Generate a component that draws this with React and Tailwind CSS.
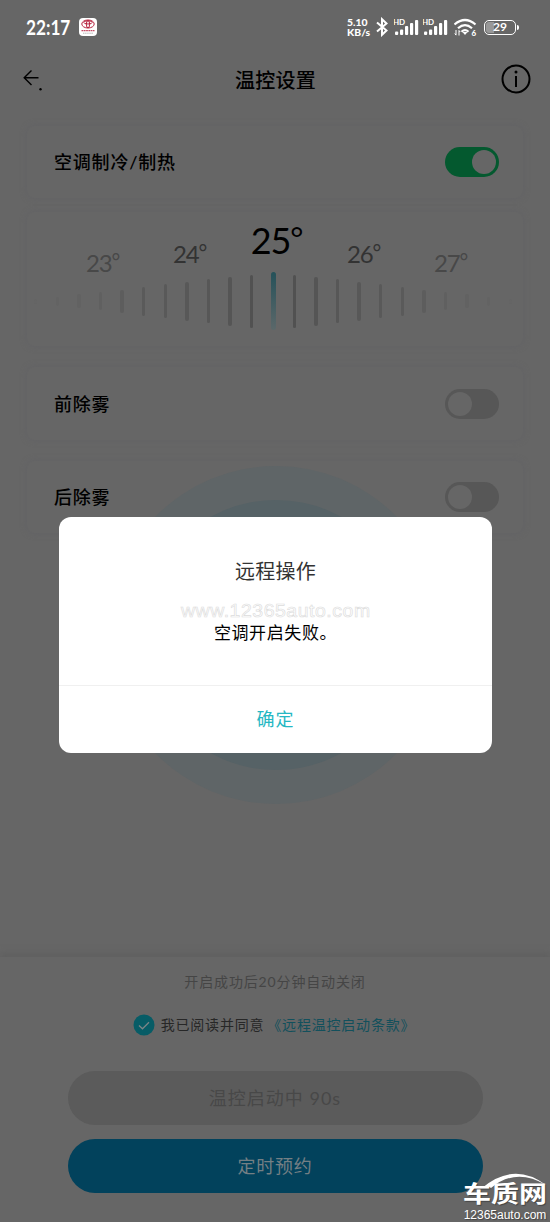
const ui = "font-['Lato','Noto_Sans_CJK_SC',sans-serif]";

const temps = [
  { value: 23, className: 'w-[87px] pt-[23px] text-[24px] text-[#484848]' },
  { value: 24, className: 'w-[87px] pt-[14px] text-[24px] text-[#333333]' },
  { value: 25, className: 'w-[87px] text-[36px] text-black' },
  { value: 26, className: 'w-[87px] pt-[14px] text-[24px] text-[#333333]' },
  { value: 27, className: 'w-[87px] pt-[23px] text-[24px] text-[#484848]' },
];

// half of the dial, from the centre outwards
const ticks = [
  { h: 53, o: 0.56 },
  { h: 49, o: 0.45 },
  { h: 44, o: 0.38 },
  { h: 39, o: 0.35 },
  { h: 34, o: 0.33 },
  { h: 29, o: 0.31 },
  { h: 23, o: 0.22 },
  { h: 18, o: 0.15 },
  { h: 14, o: 0.1 },
  { h: 9, o: 0.07 },
  { h: 5, o: 0.04 },
];

function Tick({ h, o }) {
  return <span className="w-[3.5px] rounded-full bg-[#404040]" style={{ height: h, opacity: o }} />;
}

function Signal() {
  return (
    <svg width="26" height="18" viewBox="0 0 26 18" fill="#fff">
      <text x="-1" y="7" fontSize="8" fontWeight="700" fontFamily="Lato, sans-serif" textLength="12">HD</text>
      <rect x="1" y="13.500" width="3.200" height="3.500" rx="1" />
      <rect x="6" y="11.500" width="3.200" height="5.500" rx="1" />
      <rect x="11" y="8" width="3.200" height="9" rx="1" />
      <rect x="16" y="5" width="3.200" height="12" rx="1" />
      <rect x="21" y="2" width="3.200" height="15" rx="1" />
    </svg>
  );
}

function StatusBar() {
  return (
    <div className="flex h-[54px] items-center pl-[26px] pr-[34px] text-white">
      <span className="w-[44px] whitespace-nowrap text-[20px] font-bold leading-none">
        <span className="inline-block origin-left scale-x-[0.86]">22:17</span>
      </span>
      <svg className="ml-[9px]" width="18" height="18" viewBox="0 0 18 18">
        <rect width="18" height="18" rx="4" fill="#fff" />
        <g fill="none" stroke="#b51f3c" strokeWidth="1">
          <ellipse cx="9" cy="6" rx="6.2" ry="4" />
          <ellipse cx="9" cy="6.200" rx="1.600" ry="3.600" />
          <ellipse cx="9" cy="4.400" rx="4.200" ry="1.600" />
        </g>
        <path d="M2.500 12.700h13" stroke="#b51f3c" strokeWidth="1.300" strokeDasharray="1.800 .5" opacity=".8" />
        <path d="M4 15.200h10" stroke="#999" strokeWidth=".7" strokeDasharray="1.500 .6" />
      </svg>
      <div className="ml-auto flex items-center">
        <div className="w-[25px] text-[10px] font-black leading-[10px]">
          <div className="origin-left scale-x-[1.04]">5.10</div>
          <div className="origin-left scale-x-[1.04]">KB/s</div>
        </div>
        <svg className="ml-[4px]" width="12" height="20" viewBox="0 0 12 20" fill="none" stroke="#fff" strokeWidth="2">
          <path d="M1 5.500l9.500 8L6 17.800V2.200l4.500 4.300L1 14.500" />
        </svg>
        <div className="ml-[6px] flex gap-[3px]">
          <Signal />
          <Signal />
        </div>
        <svg className="ml-[5px]" width="24" height="19" viewBox="0 0 24 19" fill="none" stroke="#fff" strokeWidth="2.2">
          <path d="M.5 6.500Q11-2.500 21.500 6.500M4 10.300Q11 4 18 10.300M7.500 13.800Q11 10.500 14.500 13.800" />
          <path d="M8.500 14h5L11 17z" fill="#fff" stroke="none" />
          <path d="M2 12v5M.8 15.500L2 17.200M5 17.500v-5M6.200 14L5 12.500" strokeWidth="1" />
          <text x="17.500" y="18" fontSize="8" fontWeight="900" fontFamily="Lato, sans-serif" fill="#fff" stroke="none">6</text>
        </svg>
        <div className="relative ml-[6px] flex h-[15px] w-[32px] items-center justify-center rounded-[5px] border-[1.5px] border-white text-[12px] font-bold leading-none">
          <span className="absolute inset-y-[1px] left-[1px] w-[8px] rounded-l-[3px] bg-[#989898]" />
          <span className="relative">29</span>
          <span className="absolute -right-[4px] top-[4px] h-[5px] w-[2px] rounded-r bg-white" />
        </div>
      </div>
    </div>
  );
}

function Toggle({ on }) {
  return (
    <span className={`flex h-[30px] w-[54px] items-center rounded-full px-[3px] ${on ? 'justify-end bg-[#04592f]' : 'justify-start bg-[#575757]'}`}>
      <span className="h-[24px] w-[24px] rounded-full bg-[#666666]" />
    </span>
  );
}

function SwitchCard({ label, on, className }) {
  return (
    <div className={`mx-[27px] flex items-center justify-between rounded-lg pl-[27px] pr-[24px] shadow-[0_0_6px_#626265] ${className}`}>
      <span className="text-[18px] font-medium leading-none tracking-[0.8px] text-black">{label}</span>
      <Toggle on={on} />
    </div>
  );
}

function Dial() {
  return (
    <div className="mx-[27px] mt-[14px] h-[134px] rounded-lg shadow-[0_0_6px_#626265]">
      <div className="flex h-[60px] justify-center pl-[3px] pt-[8px]">
        {temps.map((t) => (
          <div key={t.value} className={`flex justify-center leading-[40px] tracking-[-1.2px] ${t.className}`}>
            {t.value}
            <span className="-mt-[2px] text-[0.88em]">°</span>
          </div>
        ))}
      </div>
      <div className="flex h-[58px] items-center justify-center gap-[18.1px] pr-[4px]">
        {[...ticks].reverse().map((t) => <Tick key={t.h} {...t} />)}
        <span className="-mx-[1px] h-[58px] w-[5px] shrink-0 rounded-full bg-linear-to-b from-[#245159] to-[#5b686a]" />
        {ticks.map((t) => <Tick key={t.h} {...t} />)}
      </div>
    </div>
  );
}

function Dialog() {
  return (
    <div className="absolute left-[59px] top-[517px] flex h-[236px] w-[433px] flex-col rounded-[12px] bg-white text-center">
      <div className="relative flex-1">
        <h2 className="pt-[43px] text-[20px] leading-[22px] tracking-[0.2px] text-[#333333]">远程操作</h2>
        <div className="mt-[18px] font-['Liberation_Sans',sans-serif] text-[18px] leading-[22px] tracking-[0.5px] text-white [-webkit-text-stroke:0.6px_#dcdcdc]">
          <span className="inline-block scale-x-[1.08]">www.12365auto.com</span>
        </div>
        <p className="text-[17px] leading-[22px] tracking-[0.6px] text-black">空调开启失败。</p>
      </div>
      <button className="h-[68px] border-t border-[#f0f0f0] text-[18px] tracking-[1px] text-[#25b7c3]">确定</button>
    </div>
  );
}

function SiteMark() {
  return (
    <div className="absolute bottom-0 right-[2px] w-[86px] text-center text-white [text-shadow:1px_1px_1px_#444]">
      <div className="relative">
        <svg className="absolute left-[20px] top-[-1px]" width="66" height="16" viewBox="0 0 66 16">
          <path d="M0 15Q32-12 64 12Q34-6 9 15z" fill="#fff" />
        </svg>
        <div className="origin-[50%_80%] scale-y-[0.8] text-[28px] font-bold leading-[34px]">车质网</div>
      </div>
      <div className="font-['Liberation_Sans',sans-serif] text-[12px] leading-[14px]">12365auto.com</div>
    </div>
  );
}

export default function App() {
  return (
    <div className={`relative h-[1222px] w-[550px] overflow-hidden bg-[#666666] ${ui}`}>
      <div className="absolute left-[107px] top-[466px] flex h-[338px] w-[338px] items-center justify-center rounded-full bg-[#5f6567]">
        <div className="h-[270px] w-[270px] rounded-full bg-[#566266]" />
      </div>

      <div className="relative flex h-full flex-col">
        <StatusBar />
        <header className="flex h-[50px] items-center justify-between pl-[22px] pr-[19px]">
          <svg width="30" height="26" viewBox="0 0 30 26" fill="none" stroke="#000" strokeWidth="1.4">
            <path d="M9.500 4.500L2.200 11.700l7.300 7.200M2.200 11.700H16.500" />
            <circle cx="18.500" cy="23.300" r="1.200" fill="#000" stroke="none" />
          </svg>
          <h1 className="pr-[2px] pt-[2px] text-[20px] font-medium leading-none tracking-[0.2px] text-black">温控设置</h1>
          <svg width="30" height="30" viewBox="0 0 30 30" fill="none" stroke="#000" strokeWidth="2">
            <circle cx="15" cy="15" r="13.500" />
            <path d="M15 12v11" />
            <circle cx="15" cy="8" r="1.500" fill="#000" stroke="none" />
          </svg>
        </header>

        <SwitchCard label="空调制冷/制热" on className="mt-[22px] h-[72px]" />
        <Dial />
        <SwitchCard label="前除雾" className="mt-[21px] h-[73px]" />
        <SwitchCard label="后除雾" className="mt-[21px] h-[72px]" />

        <footer className="mt-auto flex h-[265px] flex-col items-center shadow-[0_-4px_6px_#606060]">
          <p className="mt-[16px] text-[14px] leading-[18px] tracking-[0.85px] text-[#454545]">开启成功后20分钟自动关闭</p>
          <div className="mt-[23px] flex h-[22px] items-center text-[14px] leading-[20px] tracking-[0.8px]">
            <svg width="22" height="22" viewBox="0 0 22 22">
              <circle cx="11" cy="11" r="10.500" fill="#075c66" />
              <path d="M6 11.500l3.500 3.300 6.500-6.500" fill="none" stroke="#7b8587" strokeWidth="1.300" />
            </svg>
            <span className="ml-[6px] text-[#272727]">我已阅读并同意</span>
            <span className="-mr-[1px] ml-[3px] text-[#12505c]">《远程温控启动条款》</span>
            <span className="w-[3px]" />
          </div>
          <button className="mt-[35px] h-[54px] w-[415px] rounded-full bg-[#5b5b5b] text-[18px] tracking-[1px] text-[#484848]">温控启动中 90s</button>
          <button className="mt-[14px] h-[54px] w-[415px] rounded-full bg-[#02425c] text-[18px] tracking-[0.8px] text-[#747f84]">定时预约</button>
        </footer>
      </div>

      <Dialog />
      <SiteMark />
    </div>
  );
}
